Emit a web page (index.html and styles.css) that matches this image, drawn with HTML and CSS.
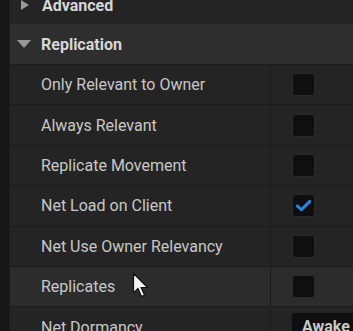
FILE: index.html
```html
<!DOCTYPE html>
<html lang="en">
<head>
    <meta charset="UTF-8">
    <title>Details - Replication</title>
    <link rel="stylesheet" href="styles.css">
</head>
<body>
    <div class="editor">
        <div class="gutter"></div>
        <div class="panel">
            <div class="category collapsed">
                <span class="arrow right"></span>
                <span class="category-name">Advanced</span>
            </div>
            <div class="category open">
                <span class="arrow down"></span>
                <span class="category-name">Replication</span>
            </div>

            <div class="prop">
                <div class="prop-name">Only Relevant to Owner</div>
                <div class="prop-value"><span class="check"></span></div>
            </div>
            <div class="prop">
                <div class="prop-name">Always Relevant</div>
                <div class="prop-value"><span class="check"></span></div>
            </div>
            <div class="prop">
                <div class="prop-name">Replicate Movement</div>
                <div class="prop-value"><span class="check"></span></div>
            </div>
            <div class="prop">
                <div class="prop-name">Net Load on Client</div>
                <div class="prop-value">
                    <span class="check checked">
                        <svg width="17" height="13" viewBox="0 0 17 13"><path d="M2.2 7 L6.5 10.6 L14.8 2.4" fill="none" stroke="#2b82e0" stroke-width="3" stroke-linecap="round" stroke-linejoin="round"/></svg>
                    </span>
                </div>
            </div>
            <div class="prop">
                <div class="prop-name">Net Use Owner Relevancy</div>
                <div class="prop-value"><span class="check"></span></div>
            </div>
            <div class="prop hover">
                <div class="prop-name">Replicates</div>
                <div class="prop-value"><span class="check"></span></div>
            </div>
            <div class="prop">
                <div class="prop-name">Net Dormancy</div>
                <div class="prop-value"><span class="combo">Awake</span></div>
            </div>
        </div>
    </div>

    <!-- mouse pointer sits over the Replicates row -->
    <svg class="cursor" width="20" height="28" viewBox="0 0 20 28">
        <path d="M1.5 1.5 L1.5 21 L6 16.5 L9.5 24.5 L12.5 23 L9 15.5 L15.5 15.5 Z" fill="#f4f4f4" stroke="#111" stroke-width="1.2" stroke-linejoin="round"/>
    </svg>
</body>
</html>
```

FILE: styles.css
```css
body {
    margin: 0;
    background-color: #242424;
    font-family: Roboto, "Liberation Sans", sans-serif;
    overflow: hidden;
}
.editor {
    display: flex;
    height: 331px;
    overflow: hidden;
}
.gutter {
    flex-shrink: 0;
    width: 9px;
    background-color: #171717;
    border-right: 1px solid #1c1c1c;
}
.panel {
    flex: 1;
    min-width: 0;
    margin-top: -16px;
}
.category {
    display: flex;
    align-items: center;
    height: 40px;
    font-size: 16px;
    font-weight: bold;
    color: #d6d6d6;
}
.category.collapsed {
    background-color: #242424;
    padding-top: 2px;
    height: 38px;
}
.category.open {
    background-color: #2e2e2e;
    border-bottom: 1px solid #1d1d1d;
}
.arrow {
    width: 0;
    height: 0;
    flex-shrink: 0;
}
.arrow.right {
    margin-left: 11px;
    margin-right: 13px;
    border-top: 5px solid transparent;
    border-bottom: 5px solid transparent;
    border-left: 8px solid #9a9a9a;
}
.arrow.down {
    margin-left: 7px;
    margin-right: 10px;
    border-left: 7px solid transparent;
    border-right: 7px solid transparent;
    border-top: 8px solid #9a9a9a;
}
.prop {
    display: flex;
    height: 40.4px;
    box-sizing: border-box;
    border-bottom: 1px solid #1c1c1c;
    background-color: #242424;
}
.prop.hover {
    background-color: #2c2c2c;
}
.prop-name {
    flex-shrink: 0;
    width: 261px;
    padding-left: 31px;
    box-sizing: border-box;
    display: flex;
    align-items: center;
    font-size: 16px;
    color: #c8c8c8;
    border-right: 1px solid #1b1b1b;
}
.prop-value {
    flex: 1;
    min-width: 0;
    display: flex;
    align-items: center;
    padding-left: 21px;
    overflow: hidden;
}
.check {
    flex-shrink: 0;
    width: 23px;
    height: 23px;
    box-sizing: border-box;
    background-color: #0f0f0f;
    border: 1px solid #2a2a2a;
    border-radius: 3px;
    display: flex;
    align-items: center;
    justify-content: center;
}
.combo {
    flex-shrink: 0;
    align-self: flex-start;
    margin-top: 6px;
    padding: 4px 10px;
    width: 80px;
    background-color: #0f0f0f;
    border-radius: 3px;
    font-size: 16px;
    font-weight: bold;
    color: #c8c8c8;
}
.cursor {
    position: absolute;
    left: 132px;
    top: 272px;
}
```
